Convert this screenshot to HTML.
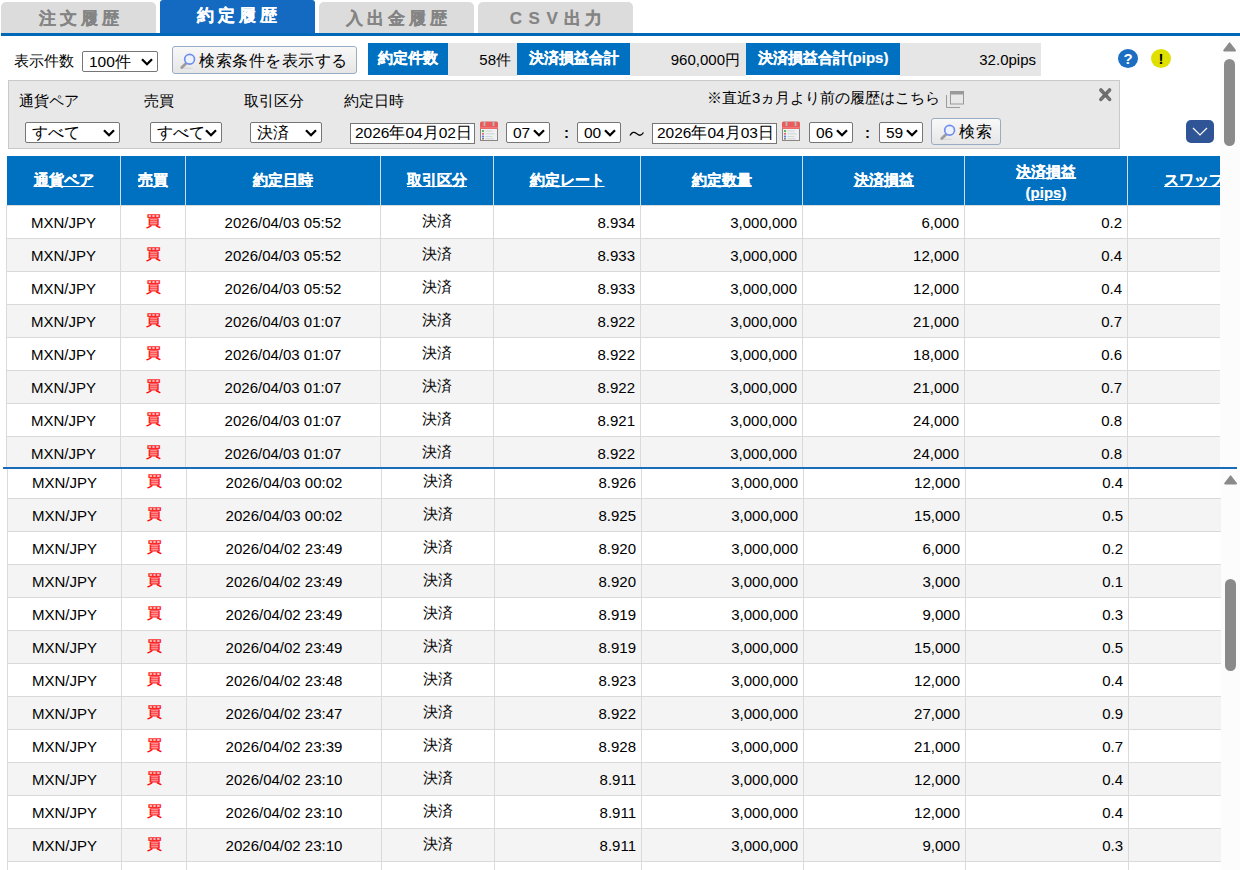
<!DOCTYPE html>
<html lang="ja"><head><meta charset="utf-8">
<style>
*{box-sizing:border-box;margin:0;padding:0}
html,body{width:1240px;height:870px;overflow:hidden;background:#fff;font-family:"Liberation Sans",sans-serif;font-size:15px;color:#000}
.a{position:absolute}
.tab{position:absolute;top:2px;height:31px;width:155px;background:#dcdcdc;border-radius:5px 5px 0 0;color:#848484;font-weight:bold;font-size:17px;letter-spacing:4px;text-align:center;line-height:33px;text-indent:5px;-webkit-text-stroke:0.15px #848484}
.tab.on{top:0;height:33px;background:#1469c0;color:#fff;border-radius:3px 3px 0 0;line-height:32px;text-indent:3px;-webkit-text-stroke:0.15px #fff}
.sel{position:absolute;border:1px solid #767676;border-radius:2px;background:#fff}
.sel .st{position:absolute;left:6px;top:1px;line-height:18px}
.sel .chev{position:absolute;top:6px;line-height:0}
.lbl{position:absolute;top:43px;height:32px;background:#0070c0;color:#fff;font-weight:bold;text-align:center;line-height:30px;-webkit-text-stroke:0.2px #fff}
.val{position:absolute;top:43px;height:33px;background:#e6e6e6;text-align:right;line-height:34px;padding-right:6px}
.row{position:absolute;height:33px;border-bottom:1px solid #dadada}
.cell{position:absolute;top:0;height:33px;line-height:33px;border-left:1px solid #dadada;padding:0 5px}
.red{color:#f00;-webkit-text-stroke:0.25px #f00}
.jp{position:relative;top:-2px}
.hd{position:absolute;top:0;height:49px;color:#fff;font-weight:bold;text-decoration:underline;text-align:center;border-left:1px solid #d0dcea;display:flex;align-items:center;justify-content:center;line-height:21px;padding-bottom:2px;-webkit-text-stroke:0.2px #fff}
.btn{position:absolute;border:1px solid #98acc4;border-radius:3px;background:linear-gradient(#f8f8f8,#e6e6e6)}
</style></head><body>
<!-- tabs -->
<div class="tab" style="left:1px">注文履歴</div>
<div class="tab on" style="left:160px">約定履歴</div>
<div class="tab" style="left:319px;text-indent:3px">入出金履歴</div>
<div class="tab" style="left:478px;text-indent:5px"><span style="letter-spacing:6.5px">CSV</span>出力</div>
<div class="a" style="left:1px;top:33px;width:1239px;height:3px;background:#0068b7"></div>

<!-- toolbar -->
<div class="a" style="left:14px;top:51px;line-height:20px">表示件数</div>
<div class="sel" style="left:82px;top:51px;width:76px;height:21px"><span class="st" style="font-size:15.5px">100件</span><span class="chev" style="left:58px"><svg width="12" height="8" viewBox="0 0 12 8"><path d="M1 1.2 L6 6.2 L11 1.2" fill="none" stroke="#000" stroke-width="2.3"/></svg></span></div>
<div class="btn" style="left:172px;top:46px;width:185px;height:28px">
  <span class="a" style="left:7px;top:1px;line-height:0"><svg width="20" height="22" viewBox="0 0 20 22"><ellipse cx="7" cy="20.3" rx="6" ry="0.8" fill="#d8d8d8"/><path d="M6.2 15.3 L1.8 19.6" stroke="#9c9c9c" stroke-width="2.8" stroke-linecap="round"/><circle cx="9.6" cy="11.2" r="4.9" fill="#eef3fb" stroke="#6f8ef0" stroke-width="1.7"/></svg></span>
  <span class="a" style="left:26px;top:3px;font-size:16px;letter-spacing:0.5px;line-height:22px;white-space:nowrap">検索条件を表示する</span>
</div>
<div class="lbl" style="left:368px;width:80px">約定件数</div>
<div class="val" style="left:448px;width:69px">58件</div>
<div class="lbl" style="left:517px;width:113px">決済損益合計</div>
<div class="val" style="left:630px;width:116px">960,000円</div>
<div class="lbl" style="left:746px;width:154px">決済損益合計(pips)</div>
<div class="val" style="left:900px;width:141px;padding-right:5px">32.0pips</div>
<div class="a" style="left:1118px;top:49px;width:20px;height:19px;border-radius:50%;background:#1b6ec2;color:#fff;font-weight:bold;font-size:15px;line-height:19px;text-align:center">?</div>
<div class="a" style="left:1151px;top:49px;width:20px;height:19px;border-radius:50%;background:#e0e000;color:#000;font-weight:bold;font-size:15px;line-height:19px;text-align:center">!</div>

<!-- search panel -->
<div class="a" style="left:8px;top:80px;width:1112px;height:69px;background:#e8e8e8;border:1px solid #c9c9c9"></div>
<div class="a" style="left:19px;top:91px;line-height:20px">通貨ペア</div>
<div class="a" style="left:144px;top:91px;line-height:20px">売買</div>
<div class="a" style="left:244px;top:91px;line-height:20px">取引区分</div>
<div class="a" style="left:344px;top:91px;line-height:20px">約定日時</div>
<div class="a" style="left:707px;top:88px;line-height:20px">※直近3ヵ月より前の履歴はこちら</div>
<div class="a" style="left:945px;top:90px;line-height:0"><svg width="20" height="19" viewBox="0 0 20 19"><rect x="5.5" y="1.5" width="13" height="12.5" fill="none" stroke="#999" stroke-width="1"/><rect x="5" y="1" width="14" height="3.5" fill="#999"/><path d="M1.5 5 V17.5 H15" fill="none" stroke="#9a9a9a" stroke-width="1"/></svg></div>
<div class="a" style="left:1097px;top:87px;line-height:0"><svg width="16" height="16" viewBox="0 0 16 16"><path d="M3.9 3 L12.6 12.4 M12.6 3 L3.9 12.4" stroke="#6c6c6c" stroke-width="3.6" stroke-linecap="round"/><path d="M4.2 3.6 L5.4 4.9 M12.2 3.6 L11 4.9 M4.2 11.8 L5.4 10.5 M12.2 11.8 L11 10.5" stroke="#8c8c8c" stroke-width="0.9" stroke-linecap="round"/></svg></div>
<div class="sel" style="left:25px;top:122px;width:95px;height:21px"><span class="st" style="font-size:15.5px">すべて</span><span class="chev" style="left:77px"><svg width="12" height="8" viewBox="0 0 12 8"><path d="M1 1.2 L6 6.2 L11 1.2" fill="none" stroke="#000" stroke-width="2.3"/></svg></span></div>
<div class="sel" style="left:150px;top:122px;width:72px;height:21px"><span class="st" style="font-size:15.5px">すべて</span><span class="chev" style="left:54px"><svg width="12" height="8" viewBox="0 0 12 8"><path d="M1 1.2 L6 6.2 L11 1.2" fill="none" stroke="#000" stroke-width="2.3"/></svg></span></div>
<div class="sel" style="left:250px;top:122px;width:72px;height:21px"><span class="st" style="font-size:15.5px">決済</span><span class="chev" style="left:54px"><svg width="12" height="8" viewBox="0 0 12 8"><path d="M1 1.2 L6 6.2 L11 1.2" fill="none" stroke="#000" stroke-width="2.3"/></svg></span></div>
<div class="a" style="left:350px;top:123px;width:125px;height:21px;background:#fff;border:1px solid #767676"><span class="a" style="left:4px;top:-1px;line-height:19px;font-size:15.5px">2026年04月02日</span></div>
<div class="a" style="left:479px;top:121px;line-height:0"><svg width="20" height="21" viewBox="0 0 20 21"><rect x="1.5" y="7" width="17" height="12.5" fill="#eef2f2" stroke="#8f8282"/><rect x="1" y="0.5" width="18" height="7.5" rx="1.5" fill="#ea5c5c"/><rect x="1" y="6" width="18" height="1.5" fill="#f07878"/><rect x="4.6" y="0" width="1.8" height="5" fill="#bbb"/><rect x="13.6" y="0" width="1.8" height="5" fill="#bbb"/><circle cx="4" cy="10" r="1.1" fill="#3a3"/><circle cx="4" cy="12.8" r="1.1" fill="#d66"/><circle cx="4" cy="15.5" r="1.1" fill="#57e"/><circle cx="4" cy="17.8" r="1" fill="#777"/><path d="M6.5 10h7M6.5 12.8h9M6.5 15.5h7M6.5 17.8h8" stroke="#c8cccc" stroke-width="0.8"/></svg></div>
<div class="sel" style="left:506px;top:122px;width:44px;height:21px"><span class="st" style="font-size:15.5px">07</span><span class="chev" style="left:26px"><svg width="12" height="8" viewBox="0 0 12 8"><path d="M1 1.2 L6 6.2 L11 1.2" fill="none" stroke="#000" stroke-width="2.3"/></svg></span></div>
<div class="a" style="left:564px;top:123px;line-height:20px;font-weight:bold">:</div>
<div class="sel" style="left:577px;top:122px;width:44px;height:21px"><span class="st" style="font-size:15.5px">00</span><span class="chev" style="left:26px"><svg width="12" height="8" viewBox="0 0 12 8"><path d="M1 1.2 L6 6.2 L11 1.2" fill="none" stroke="#000" stroke-width="2.3"/></svg></span></div>
<div class="a" style="left:629px;top:130px;line-height:0"><svg width="16" height="8" viewBox="0 0 16 8"><path d="M1 5.5 C3 2, 5 1.5, 7.5 3.5 S12 6.5, 14.5 2.5" fill="none" stroke="#000" stroke-width="1.3"/></svg></div>
<div class="a" style="left:652px;top:123px;width:125px;height:21px;background:#fff;border:1px solid #767676"><span class="a" style="left:4px;top:-1px;line-height:19px;font-size:15.5px">2026年04月03日</span></div>
<div class="a" style="left:781px;top:121px;line-height:0"><svg width="20" height="21" viewBox="0 0 20 21"><rect x="1.5" y="7" width="17" height="12.5" fill="#eef2f2" stroke="#8f8282"/><rect x="1" y="0.5" width="18" height="7.5" rx="1.5" fill="#ea5c5c"/><rect x="1" y="6" width="18" height="1.5" fill="#f07878"/><rect x="4.6" y="0" width="1.8" height="5" fill="#bbb"/><rect x="13.6" y="0" width="1.8" height="5" fill="#bbb"/><circle cx="4" cy="10" r="1.1" fill="#3a3"/><circle cx="4" cy="12.8" r="1.1" fill="#d66"/><circle cx="4" cy="15.5" r="1.1" fill="#57e"/><circle cx="4" cy="17.8" r="1" fill="#777"/><path d="M6.5 10h7M6.5 12.8h9M6.5 15.5h7M6.5 17.8h8" stroke="#c8cccc" stroke-width="0.8"/></svg></div>
<div class="sel" style="left:809px;top:122px;width:44px;height:21px"><span class="st" style="font-size:15.5px">06</span><span class="chev" style="left:26px"><svg width="12" height="8" viewBox="0 0 12 8"><path d="M1 1.2 L6 6.2 L11 1.2" fill="none" stroke="#000" stroke-width="2.3"/></svg></span></div>
<div class="a" style="left:865px;top:123px;line-height:20px;font-weight:bold">:</div>
<div class="sel" style="left:879px;top:122px;width:44px;height:21px"><span class="st" style="font-size:15.5px">59</span><span class="chev" style="left:26px"><svg width="12" height="8" viewBox="0 0 12 8"><path d="M1 1.2 L6 6.2 L11 1.2" fill="none" stroke="#000" stroke-width="2.3"/></svg></span></div>
<div class="btn" style="left:931px;top:118px;width:70px;height:27px">
  <span class="a" style="left:8px;top:0px;line-height:0"><svg width="20" height="22" viewBox="0 0 20 22"><ellipse cx="7" cy="20.3" rx="6" ry="0.8" fill="#d8d8d8"/><path d="M6.2 15.3 L1.8 19.6" stroke="#9c9c9c" stroke-width="2.8" stroke-linecap="round"/><circle cx="9.6" cy="11.2" r="4.9" fill="#eef3fb" stroke="#6f8ef0" stroke-width="1.7"/></svg></span>
  <span class="a" style="left:27px;top:2px;font-size:16px;letter-spacing:0.5px;line-height:22px;white-space:nowrap">検索</span>
</div>
<div class="a" style="left:1186px;top:120px;width:28px;height:23px;background:#2f5597;border-radius:5px"><span class="a" style="left:6px;top:7px;line-height:0"><svg width="16" height="9" viewBox="0 0 16 9"><path d="M1 1 L8 8 L15 1" fill="none" stroke="#fff" stroke-width="1.2"/></svg></span></div>

<!-- scrollbar top -->
<div class="a" style="left:1220px;top:36px;width:20px;height:431px;background:#fcfcfc"></div>
<div class="a" style="left:1223px;top:42px;line-height:0"><svg width="14" height="10" viewBox="0 0 14 10"><path d="M6.6 1.2 L12.2 8.6 H1 Z" fill="#8a8a8a" stroke="#8a8a8a" stroke-width="1.6" stroke-linejoin="round"/></svg></div>
<div class="a" style="left:1224px;top:59px;width:11px;height:87px;border-radius:6px;background:#8a8a8a"></div>

<!-- upper table -->
<div class="a" style="left:0;top:155px;width:1220px;height:312px;overflow:hidden">
 <div class="a" style="left:7px;top:1px;width:1213px;height:49px;background:#0070c0">
  <div class="hd" style="left:0px;width:113px;border-left:none;">通貨ペア</div>
  <div class="hd" style="left:113px;width:65px;">売買</div>
  <div class="hd" style="left:178px;width:195px;">約定日時</div>
  <div class="hd" style="left:373px;width:113px;">取引区分</div>
  <div class="hd" style="left:486px;width:147px;">約定レート</div>
  <div class="hd" style="left:633px;width:162px;">約定数量</div>
  <div class="hd" style="left:795px;width:162px;">決済損益</div>
  <div class="hd" style="left:957px;width:163px;"><span style='position:relative;top:2px'>決済損益<br>(pips)</span></div>
  <div class="hd" style="left:1120px;width:133px;">スワップ</div>
 </div>
<div class="a" style="left:6px;top:50px;width:1214px;height:1px;background:#dadada"></div>
<div class="a" style="left:0;top:51px;width:1220px;height:300px"><div class="row" style="top:0px;left:6px;width:1214px;background:#fff">
<div class="cell" style="left:0px;width:114px;text-align:center">MXN/JPY</div>
<div class="cell red" style="left:114px;width:65px;text-align:center"><span class="jp">買</span></div>
<div class="cell" style="left:179px;width:195px;text-align:center">2026/04/03 05:52</div>
<div class="cell" style="left:374px;width:113px;text-align:center"><span class="jp">決済</span></div>
<div class="cell" style="left:487px;width:147px;text-align:right">8.934</div>
<div class="cell" style="left:634px;width:162px;text-align:right">3,000,000</div>
<div class="cell" style="left:796px;width:162px;text-align:right">6,000</div>
<div class="cell" style="left:958px;width:163px;text-align:right">0.2</div>
<div class="cell" style="left:1121px;width:93px;text-align:right"></div>
</div>
<div class="row" style="top:33px;left:6px;width:1214px;background:#f4f4f4">
<div class="cell" style="left:0px;width:114px;text-align:center">MXN/JPY</div>
<div class="cell red" style="left:114px;width:65px;text-align:center"><span class="jp">買</span></div>
<div class="cell" style="left:179px;width:195px;text-align:center">2026/04/03 05:52</div>
<div class="cell" style="left:374px;width:113px;text-align:center"><span class="jp">決済</span></div>
<div class="cell" style="left:487px;width:147px;text-align:right">8.933</div>
<div class="cell" style="left:634px;width:162px;text-align:right">3,000,000</div>
<div class="cell" style="left:796px;width:162px;text-align:right">12,000</div>
<div class="cell" style="left:958px;width:163px;text-align:right">0.4</div>
<div class="cell" style="left:1121px;width:93px;text-align:right"></div>
</div>
<div class="row" style="top:66px;left:6px;width:1214px;background:#fff">
<div class="cell" style="left:0px;width:114px;text-align:center">MXN/JPY</div>
<div class="cell red" style="left:114px;width:65px;text-align:center"><span class="jp">買</span></div>
<div class="cell" style="left:179px;width:195px;text-align:center">2026/04/03 05:52</div>
<div class="cell" style="left:374px;width:113px;text-align:center"><span class="jp">決済</span></div>
<div class="cell" style="left:487px;width:147px;text-align:right">8.933</div>
<div class="cell" style="left:634px;width:162px;text-align:right">3,000,000</div>
<div class="cell" style="left:796px;width:162px;text-align:right">12,000</div>
<div class="cell" style="left:958px;width:163px;text-align:right">0.4</div>
<div class="cell" style="left:1121px;width:93px;text-align:right"></div>
</div>
<div class="row" style="top:99px;left:6px;width:1214px;background:#f4f4f4">
<div class="cell" style="left:0px;width:114px;text-align:center">MXN/JPY</div>
<div class="cell red" style="left:114px;width:65px;text-align:center"><span class="jp">買</span></div>
<div class="cell" style="left:179px;width:195px;text-align:center">2026/04/03 01:07</div>
<div class="cell" style="left:374px;width:113px;text-align:center"><span class="jp">決済</span></div>
<div class="cell" style="left:487px;width:147px;text-align:right">8.922</div>
<div class="cell" style="left:634px;width:162px;text-align:right">3,000,000</div>
<div class="cell" style="left:796px;width:162px;text-align:right">21,000</div>
<div class="cell" style="left:958px;width:163px;text-align:right">0.7</div>
<div class="cell" style="left:1121px;width:93px;text-align:right"></div>
</div>
<div class="row" style="top:132px;left:6px;width:1214px;background:#fff">
<div class="cell" style="left:0px;width:114px;text-align:center">MXN/JPY</div>
<div class="cell red" style="left:114px;width:65px;text-align:center"><span class="jp">買</span></div>
<div class="cell" style="left:179px;width:195px;text-align:center">2026/04/03 01:07</div>
<div class="cell" style="left:374px;width:113px;text-align:center"><span class="jp">決済</span></div>
<div class="cell" style="left:487px;width:147px;text-align:right">8.922</div>
<div class="cell" style="left:634px;width:162px;text-align:right">3,000,000</div>
<div class="cell" style="left:796px;width:162px;text-align:right">18,000</div>
<div class="cell" style="left:958px;width:163px;text-align:right">0.6</div>
<div class="cell" style="left:1121px;width:93px;text-align:right"></div>
</div>
<div class="row" style="top:165px;left:6px;width:1214px;background:#f4f4f4">
<div class="cell" style="left:0px;width:114px;text-align:center">MXN/JPY</div>
<div class="cell red" style="left:114px;width:65px;text-align:center"><span class="jp">買</span></div>
<div class="cell" style="left:179px;width:195px;text-align:center">2026/04/03 01:07</div>
<div class="cell" style="left:374px;width:113px;text-align:center"><span class="jp">決済</span></div>
<div class="cell" style="left:487px;width:147px;text-align:right">8.922</div>
<div class="cell" style="left:634px;width:162px;text-align:right">3,000,000</div>
<div class="cell" style="left:796px;width:162px;text-align:right">21,000</div>
<div class="cell" style="left:958px;width:163px;text-align:right">0.7</div>
<div class="cell" style="left:1121px;width:93px;text-align:right"></div>
</div>
<div class="row" style="top:198px;left:6px;width:1214px;background:#fff">
<div class="cell" style="left:0px;width:114px;text-align:center">MXN/JPY</div>
<div class="cell red" style="left:114px;width:65px;text-align:center"><span class="jp">買</span></div>
<div class="cell" style="left:179px;width:195px;text-align:center">2026/04/03 01:07</div>
<div class="cell" style="left:374px;width:113px;text-align:center"><span class="jp">決済</span></div>
<div class="cell" style="left:487px;width:147px;text-align:right">8.921</div>
<div class="cell" style="left:634px;width:162px;text-align:right">3,000,000</div>
<div class="cell" style="left:796px;width:162px;text-align:right">24,000</div>
<div class="cell" style="left:958px;width:163px;text-align:right">0.8</div>
<div class="cell" style="left:1121px;width:93px;text-align:right"></div>
</div>
<div class="row" style="top:231px;left:6px;width:1214px;background:#f4f4f4">
<div class="cell" style="left:0px;width:114px;text-align:center">MXN/JPY</div>
<div class="cell red" style="left:114px;width:65px;text-align:center"><span class="jp">買</span></div>
<div class="cell" style="left:179px;width:195px;text-align:center">2026/04/03 01:07</div>
<div class="cell" style="left:374px;width:113px;text-align:center"><span class="jp">決済</span></div>
<div class="cell" style="left:487px;width:147px;text-align:right">8.922</div>
<div class="cell" style="left:634px;width:162px;text-align:right">3,000,000</div>
<div class="cell" style="left:796px;width:162px;text-align:right">24,000</div>
<div class="cell" style="left:958px;width:163px;text-align:right">0.8</div>
<div class="cell" style="left:1121px;width:93px;text-align:right"></div>
</div></div>
</div>

<!-- seam blue line -->
<div class="a" style="left:3px;top:467px;width:1234px;height:2px;background:#1a6cb8"></div>
<!-- lower table -->
<div class="a" style="left:0;top:469px;width:1221px;height:401px;overflow:hidden">
<div class="a" style="left:0;top:-3px;width:1221px;height:500px"><div class="row" style="top:0px;left:7px;width:1214px;background:#fff">
<div class="cell" style="left:0px;width:114px;text-align:center">MXN/JPY</div>
<div class="cell red" style="left:114px;width:65px;text-align:center"><span class="jp">買</span></div>
<div class="cell" style="left:179px;width:195px;text-align:center">2026/04/03 00:02</div>
<div class="cell" style="left:374px;width:113px;text-align:center"><span class="jp">決済</span></div>
<div class="cell" style="left:487px;width:147px;text-align:right">8.926</div>
<div class="cell" style="left:634px;width:162px;text-align:right">3,000,000</div>
<div class="cell" style="left:796px;width:162px;text-align:right">12,000</div>
<div class="cell" style="left:958px;width:163px;text-align:right">0.4</div>
<div class="cell" style="left:1121px;width:93px;text-align:right"></div>
</div>
<div class="row" style="top:33px;left:7px;width:1214px;background:#f4f4f4">
<div class="cell" style="left:0px;width:114px;text-align:center">MXN/JPY</div>
<div class="cell red" style="left:114px;width:65px;text-align:center"><span class="jp">買</span></div>
<div class="cell" style="left:179px;width:195px;text-align:center">2026/04/03 00:02</div>
<div class="cell" style="left:374px;width:113px;text-align:center"><span class="jp">決済</span></div>
<div class="cell" style="left:487px;width:147px;text-align:right">8.925</div>
<div class="cell" style="left:634px;width:162px;text-align:right">3,000,000</div>
<div class="cell" style="left:796px;width:162px;text-align:right">15,000</div>
<div class="cell" style="left:958px;width:163px;text-align:right">0.5</div>
<div class="cell" style="left:1121px;width:93px;text-align:right"></div>
</div>
<div class="row" style="top:66px;left:7px;width:1214px;background:#fff">
<div class="cell" style="left:0px;width:114px;text-align:center">MXN/JPY</div>
<div class="cell red" style="left:114px;width:65px;text-align:center"><span class="jp">買</span></div>
<div class="cell" style="left:179px;width:195px;text-align:center">2026/04/02 23:49</div>
<div class="cell" style="left:374px;width:113px;text-align:center"><span class="jp">決済</span></div>
<div class="cell" style="left:487px;width:147px;text-align:right">8.920</div>
<div class="cell" style="left:634px;width:162px;text-align:right">3,000,000</div>
<div class="cell" style="left:796px;width:162px;text-align:right">6,000</div>
<div class="cell" style="left:958px;width:163px;text-align:right">0.2</div>
<div class="cell" style="left:1121px;width:93px;text-align:right"></div>
</div>
<div class="row" style="top:99px;left:7px;width:1214px;background:#f4f4f4">
<div class="cell" style="left:0px;width:114px;text-align:center">MXN/JPY</div>
<div class="cell red" style="left:114px;width:65px;text-align:center"><span class="jp">買</span></div>
<div class="cell" style="left:179px;width:195px;text-align:center">2026/04/02 23:49</div>
<div class="cell" style="left:374px;width:113px;text-align:center"><span class="jp">決済</span></div>
<div class="cell" style="left:487px;width:147px;text-align:right">8.920</div>
<div class="cell" style="left:634px;width:162px;text-align:right">3,000,000</div>
<div class="cell" style="left:796px;width:162px;text-align:right">3,000</div>
<div class="cell" style="left:958px;width:163px;text-align:right">0.1</div>
<div class="cell" style="left:1121px;width:93px;text-align:right"></div>
</div>
<div class="row" style="top:132px;left:7px;width:1214px;background:#fff">
<div class="cell" style="left:0px;width:114px;text-align:center">MXN/JPY</div>
<div class="cell red" style="left:114px;width:65px;text-align:center"><span class="jp">買</span></div>
<div class="cell" style="left:179px;width:195px;text-align:center">2026/04/02 23:49</div>
<div class="cell" style="left:374px;width:113px;text-align:center"><span class="jp">決済</span></div>
<div class="cell" style="left:487px;width:147px;text-align:right">8.919</div>
<div class="cell" style="left:634px;width:162px;text-align:right">3,000,000</div>
<div class="cell" style="left:796px;width:162px;text-align:right">9,000</div>
<div class="cell" style="left:958px;width:163px;text-align:right">0.3</div>
<div class="cell" style="left:1121px;width:93px;text-align:right"></div>
</div>
<div class="row" style="top:165px;left:7px;width:1214px;background:#f4f4f4">
<div class="cell" style="left:0px;width:114px;text-align:center">MXN/JPY</div>
<div class="cell red" style="left:114px;width:65px;text-align:center"><span class="jp">買</span></div>
<div class="cell" style="left:179px;width:195px;text-align:center">2026/04/02 23:49</div>
<div class="cell" style="left:374px;width:113px;text-align:center"><span class="jp">決済</span></div>
<div class="cell" style="left:487px;width:147px;text-align:right">8.919</div>
<div class="cell" style="left:634px;width:162px;text-align:right">3,000,000</div>
<div class="cell" style="left:796px;width:162px;text-align:right">15,000</div>
<div class="cell" style="left:958px;width:163px;text-align:right">0.5</div>
<div class="cell" style="left:1121px;width:93px;text-align:right"></div>
</div>
<div class="row" style="top:198px;left:7px;width:1214px;background:#fff">
<div class="cell" style="left:0px;width:114px;text-align:center">MXN/JPY</div>
<div class="cell red" style="left:114px;width:65px;text-align:center"><span class="jp">買</span></div>
<div class="cell" style="left:179px;width:195px;text-align:center">2026/04/02 23:48</div>
<div class="cell" style="left:374px;width:113px;text-align:center"><span class="jp">決済</span></div>
<div class="cell" style="left:487px;width:147px;text-align:right">8.923</div>
<div class="cell" style="left:634px;width:162px;text-align:right">3,000,000</div>
<div class="cell" style="left:796px;width:162px;text-align:right">12,000</div>
<div class="cell" style="left:958px;width:163px;text-align:right">0.4</div>
<div class="cell" style="left:1121px;width:93px;text-align:right"></div>
</div>
<div class="row" style="top:231px;left:7px;width:1214px;background:#f4f4f4">
<div class="cell" style="left:0px;width:114px;text-align:center">MXN/JPY</div>
<div class="cell red" style="left:114px;width:65px;text-align:center"><span class="jp">買</span></div>
<div class="cell" style="left:179px;width:195px;text-align:center">2026/04/02 23:47</div>
<div class="cell" style="left:374px;width:113px;text-align:center"><span class="jp">決済</span></div>
<div class="cell" style="left:487px;width:147px;text-align:right">8.922</div>
<div class="cell" style="left:634px;width:162px;text-align:right">3,000,000</div>
<div class="cell" style="left:796px;width:162px;text-align:right">27,000</div>
<div class="cell" style="left:958px;width:163px;text-align:right">0.9</div>
<div class="cell" style="left:1121px;width:93px;text-align:right"></div>
</div>
<div class="row" style="top:264px;left:7px;width:1214px;background:#fff">
<div class="cell" style="left:0px;width:114px;text-align:center">MXN/JPY</div>
<div class="cell red" style="left:114px;width:65px;text-align:center"><span class="jp">買</span></div>
<div class="cell" style="left:179px;width:195px;text-align:center">2026/04/02 23:39</div>
<div class="cell" style="left:374px;width:113px;text-align:center"><span class="jp">決済</span></div>
<div class="cell" style="left:487px;width:147px;text-align:right">8.928</div>
<div class="cell" style="left:634px;width:162px;text-align:right">3,000,000</div>
<div class="cell" style="left:796px;width:162px;text-align:right">21,000</div>
<div class="cell" style="left:958px;width:163px;text-align:right">0.7</div>
<div class="cell" style="left:1121px;width:93px;text-align:right"></div>
</div>
<div class="row" style="top:297px;left:7px;width:1214px;background:#f4f4f4">
<div class="cell" style="left:0px;width:114px;text-align:center">MXN/JPY</div>
<div class="cell red" style="left:114px;width:65px;text-align:center"><span class="jp">買</span></div>
<div class="cell" style="left:179px;width:195px;text-align:center">2026/04/02 23:10</div>
<div class="cell" style="left:374px;width:113px;text-align:center"><span class="jp">決済</span></div>
<div class="cell" style="left:487px;width:147px;text-align:right">8.911</div>
<div class="cell" style="left:634px;width:162px;text-align:right">3,000,000</div>
<div class="cell" style="left:796px;width:162px;text-align:right">12,000</div>
<div class="cell" style="left:958px;width:163px;text-align:right">0.4</div>
<div class="cell" style="left:1121px;width:93px;text-align:right"></div>
</div>
<div class="row" style="top:330px;left:7px;width:1214px;background:#fff">
<div class="cell" style="left:0px;width:114px;text-align:center">MXN/JPY</div>
<div class="cell red" style="left:114px;width:65px;text-align:center"><span class="jp">買</span></div>
<div class="cell" style="left:179px;width:195px;text-align:center">2026/04/02 23:10</div>
<div class="cell" style="left:374px;width:113px;text-align:center"><span class="jp">決済</span></div>
<div class="cell" style="left:487px;width:147px;text-align:right">8.911</div>
<div class="cell" style="left:634px;width:162px;text-align:right">3,000,000</div>
<div class="cell" style="left:796px;width:162px;text-align:right">12,000</div>
<div class="cell" style="left:958px;width:163px;text-align:right">0.4</div>
<div class="cell" style="left:1121px;width:93px;text-align:right"></div>
</div>
<div class="row" style="top:363px;left:7px;width:1214px;background:#f4f4f4">
<div class="cell" style="left:0px;width:114px;text-align:center">MXN/JPY</div>
<div class="cell red" style="left:114px;width:65px;text-align:center"><span class="jp">買</span></div>
<div class="cell" style="left:179px;width:195px;text-align:center">2026/04/02 23:10</div>
<div class="cell" style="left:374px;width:113px;text-align:center"><span class="jp">決済</span></div>
<div class="cell" style="left:487px;width:147px;text-align:right">8.911</div>
<div class="cell" style="left:634px;width:162px;text-align:right">3,000,000</div>
<div class="cell" style="left:796px;width:162px;text-align:right">9,000</div>
<div class="cell" style="left:958px;width:163px;text-align:right">0.3</div>
<div class="cell" style="left:1121px;width:93px;text-align:right"></div>
</div>
<div class="row" style="top:396px;left:7px;width:1214px;background:#fff">
<div class="cell" style="left:0px;width:114px;text-align:center"></div>
<div class="cell red" style="left:114px;width:65px;text-align:center"></div>
<div class="cell" style="left:179px;width:195px;text-align:center"></div>
<div class="cell" style="left:374px;width:113px;text-align:center"></div>
<div class="cell" style="left:487px;width:147px;text-align:right"></div>
<div class="cell" style="left:634px;width:162px;text-align:right"></div>
<div class="cell" style="left:796px;width:162px;text-align:right"></div>
<div class="cell" style="left:958px;width:163px;text-align:right"></div>
<div class="cell" style="left:1121px;width:93px;text-align:right"></div>
</div></div>
</div>
<div class="a" style="left:1221px;top:469px;width:19px;height:401px;background:#fcfcfc"></div>
<div class="a" style="left:1224px;top:475px;line-height:0"><svg width="14" height="10" viewBox="0 0 14 10"><path d="M6.6 1.2 L12.2 8.6 H1 Z" fill="#8a8a8a" stroke="#8a8a8a" stroke-width="1.6" stroke-linejoin="round"/></svg></div>
<div class="a" style="left:1225px;top:579px;width:11px;height:92px;border-radius:6px;background:#8a8a8a"></div>
</body></html>
